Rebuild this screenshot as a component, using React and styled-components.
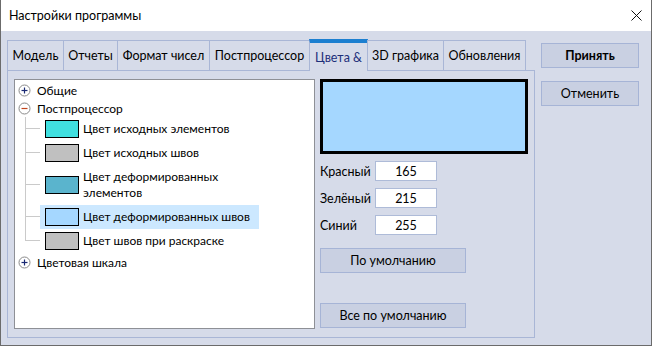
import React from "react";
import styled, { createGlobalStyle } from "styled-components";

const GlobalStyle = createGlobalStyle`
  html, body {
    margin: 0;
    padding: 0;
    background: #ffffff;
  }
  body {
    font-family: Lato, "Noto Sans", sans-serif;
    font-size: 12.5px;
    color: #000;
  }
`;

const Window = styled.div`
  width: 652px;
  height: 346px;
  box-sizing: border-box;
  border: 1px solid #6b6b6b;
  border-top: none;
  display: flex;
  flex-direction: column;
  background: #d6dbe9;
`;

const TitleBar = styled.div`
  height: 31px;
  flex: none;
  background: #ffffff;
  display: flex;
  align-items: center;
  justify-content: space-between;
  padding: 0 9px 0 8px;
`;

const Title = styled.span`
  font-size: 12.5px;
`;

const CloseIcon = () => (
  <svg width="11" height="11" viewBox="0 0 11 11">
    <path d="M0.5 0.5 L10.5 10.5 M10.5 0.5 L0.5 10.5" stroke="#111" strokeWidth="1" />
  </svg>
);

const Body = styled.div`
  flex: 1;
  display: flex;
  padding: 8px 0 0 6px;
  gap: 6px;
`;

const LeftColumn = styled.div`
  display: flex;
  flex-direction: column;
  width: 528px;
`;

const TabStrip = styled.div`
  display: flex;
  align-items: flex-end;
  height: 31px;
  position: relative;
  z-index: 1;
`;

const Tab = styled.div`
  box-sizing: border-box;
  width: ${(p) => p.$w}px;
  height: ${(p) => (p.$active ? 32 : 30)}px;
  margin-right: -1px;
  margin-bottom: ${(p) => (p.$active ? -1 : 0)}px;
  border: 1px solid #a9b6d6;
  border-bottom: none;
  border-top: ${(p) => (p.$active ? "4px solid #1c7fd0" : "1px solid #a9b6d6")};
  background: #d6dbe9;
  display: flex;
  align-items: center;
  justify-content: center;
  padding-bottom: ${(p) => (p.$active ? 0 : 1)}px;
  color: ${(p) => (p.$active ? "#1d2f7a" : "#000")};
  white-space: nowrap;
`;

const Panel = styled.div`
  box-sizing: border-box;
  height: 268px;
  border: 1px solid #a9b6d6;
  display: flex;
  gap: 5px;
  padding: 8px 0 0 6px;
`;

const Tree = styled.div`
  box-sizing: border-box;
  width: 301px;
  height: 250px;
  background: #ffffff;
  border: 1px solid #8e9096;
  padding-top: 1px;
  display: flex;
  flex-direction: column;
  font-size: 12px;
`;

const TopRow = styled.div`
  height: 18px;
  display: flex;
  align-items: center;
  padding-left: 3px;
  gap: 6px;
`;

const Toggle = ({ open }) => (
  <svg width="13" height="13" viewBox="0 0 13 13">
    <circle cx="6.5" cy="6.5" r="5.5" fill="#fff" stroke="#8a8a8a" strokeWidth="1" />
    <path d="M3.5 6.5 H9.5" stroke={open ? "#c0451f" : "#1b2a74"} strokeWidth="1.2" />
    {!open && <path d="M6.5 3.5 V9.5" stroke="#1b2a74" strokeWidth="1.2" />}
  </svg>
);

const ChildRow = styled.div`
  height: ${(p) => p.$h}px;
  display: flex;
  align-items: stretch;
`;

const Connector = styled.div`
  width: 15px;
  margin-left: 10px;
  display: flex;
  flex-direction: column;
  flex: none;
`;

const ConnTop = styled.div`
  flex: 1;
  border-left: 1px solid #cacaca;
`;

const ConnBottom = styled.div`
  flex: 1;
  border-top: 1px solid #cacaca;
  border-left: ${(p) => (p.$last ? "none" : "1px solid #cacaca")};
  margin-top: -1px;
`;

const Item = styled.div`
  display: flex;
  align-items: center;
  gap: 4px;
  padding: 0 9px 0 5px;
  background: ${(p) => (p.$selected ? "#cce8ff" : "transparent")};
`;

const Swatch = styled.div`
  box-sizing: border-box;
  width: 34px;
  height: 18px;
  flex: none;
  border: 1px solid #000;
  background: ${(p) => p.$color};
`;

const ItemText = styled.span`
  line-height: 16px;
`;

const Side = styled.div`
  width: 208px;
  display: flex;
  flex-direction: column;
`;

const Preview = styled.div`
  box-sizing: border-box;
  height: 75px;
  border: 3px solid #000;
  background: ${(p) => p.$color};
`;

const Fields = styled.div`
  display: flex;
  flex-direction: column;
  gap: 7px;
  margin-top: 7px;
`;

const FieldRow = styled.div`
  display: flex;
  align-items: center;
  height: 20px;
`;

const FieldLabel = styled.span`
  width: 55px;
`;

const NumberBox = styled.div`
  box-sizing: border-box;
  width: 62px;
  height: 20px;
  background: #fff;
  border: 1px solid #aebbd8;
  display: flex;
  align-items: center;
  justify-content: center;
`;

const Button = styled.div`
  box-sizing: border-box;
  width: ${(p) => p.$w}px;
  height: 25px;
  margin-top: ${(p) => p.$mt}px;
  background: #c9d0e2;
  border: 1px solid #a6b4d6;
  display: flex;
  align-items: center;
  justify-content: center;
  font-weight: ${(p) => (p.$bold ? 700 : 400)};
`;

const RightColumn = styled.div`
  display: flex;
  flex-direction: column;
  padding-top: 4px;
`;

const tabs = [
  { label: "Модель", w: 57 },
  { label: "Отчеты", w: 55 },
  { label: "Формат чисел", w: 93 },
  { label: "Постпроцессор", w: 101 },
  { label: "Цвета &", w: 59, active: true },
  { label: "3D графика", w: 77 },
  { label: "Обновления", w: 83 },
];

const children = [
  { color: "#40e0e0", text: "Цвет исходных элементов", h: 24 },
  { color: "#c0c0c0", text: "Цвет исходных швов", h: 24 },
  { color: "#5ab4cd", text: ["Цвет деформированных", "элементов"], h: 40 },
  { color: "#a5d7ff", text: "Цвет деформированных швов", h: 24, selected: true },
  { color: "#c0c0c0", text: "Цвет швов при раскраске", h: 24, last: true },
];

export default function App() {
  return (
    <>
      <GlobalStyle />
      <Window>
        <TitleBar>
          <Title>Настройки программы</Title>
          <CloseIcon />
        </TitleBar>
        <Body>
          <LeftColumn>
            <TabStrip>
              {tabs.map((t) => (
                <Tab key={t.label} $w={t.w} $active={t.active}>
                  {t.label}
                </Tab>
              ))}
            </TabStrip>
            <Panel>
              <Tree>
                <TopRow>
                  <Toggle />
                  <span>Общие</span>
                </TopRow>
                <TopRow>
                  <Toggle open />
                  <span>Постпроцессор</span>
                </TopRow>
                {children.map((c, i) => (
                  <ChildRow key={i} $h={c.h}>
                    <Connector>
                      <ConnTop />
                      <ConnBottom $last={c.last} />
                    </Connector>
                    <Item $selected={c.selected}>
                      <Swatch $color={c.color} />
                      <ItemText>
                        {Array.isArray(c.text)
                          ? c.text.map((line) => <div key={line}>{line}</div>)
                          : c.text}
                      </ItemText>
                    </Item>
                  </ChildRow>
                ))}
                <TopRow>
                  <Toggle />
                  <span>Цветовая шкала</span>
                </TopRow>
              </Tree>
              <Side>
                <Preview $color="rgb(165, 215, 255)" />
                <Fields>
                  <FieldRow>
                    <FieldLabel>Красный</FieldLabel>
                    <NumberBox>165</NumberBox>
                  </FieldRow>
                  <FieldRow>
                    <FieldLabel>Зелёный</FieldLabel>
                    <NumberBox>215</NumberBox>
                  </FieldRow>
                  <FieldRow>
                    <FieldLabel>Синий</FieldLabel>
                    <NumberBox>255</NumberBox>
                  </FieldRow>
                </Fields>
                <Button $w={146} $mt={13}>По умолчанию</Button>
                <Button $w={146} $mt={30}>Все по умолчанию</Button>
              </Side>
            </Panel>
          </LeftColumn>
          <RightColumn>
            <Button $w={98} $mt={0} $bold>Принять</Button>
            <Button $w={98} $mt={13}>Отменить</Button>
          </RightColumn>
        </Body>
      </Window>
    </>
  );
}
